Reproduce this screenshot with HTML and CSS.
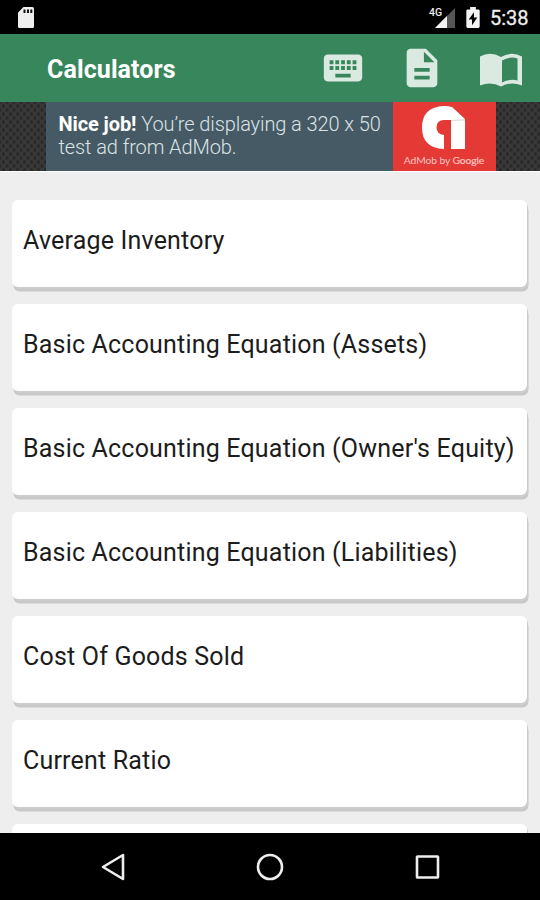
FILE: index.html
```
<!DOCTYPE html>
<html lang="en">
<head>
<meta charset="utf-8">
<title>Calculators</title>
<link rel="stylesheet" href="styles.css">
</head>
<body>
<div class="screen">
  <div class="status">
    <svg class="sd" width="16" height="21" viewBox="0 0 16 21"><path fill="#eee" d="M5.500 0H14.500Q16 0 16 1.500V19.500Q16 21 14.500 21H1.500Q0 21 0 19.500V5.500Z"/><path fill="#111" d="M5.500 2.500h2v3.500h-2zM9 2.500h2v3.500H9zM12.300 2.500h2v3.500h-2z"/></svg>
    <div class="status-right">
      <svg width="28" height="22" viewBox="0 0 28 22"><path fill="#555" d="M26 1V21H6Z"/><path fill="#000" d="M0 0h15v9H0z"/><path fill="#f4f4f4" d="M18 9V21H6Z"/><text class="net" x="0" y="9">4G</text></svg>
      <svg class="battery" width="14" height="21" viewBox="0 0 14 22"><path fill="#f2f2f2" d="M4 0h6v2.500h2.500Q14 2.500 14 4v16.500Q14 22 12.500 22h-11Q0 22 0 20.500V4Q0 2.500 1.500 2.500H4z"/><path fill="#000" d="M8 5.500L2.500 13H6v6l5.500-8H8z"/></svg>
      <span class="clock">5:38</span>
    </div>
  </div>
  <header class="bar">
    <h1>Calculators</h1>
    <nav>
      <svg width="46" height="46" viewBox="0 0 24 24"><path d="M20 5H4c-1.100 0-1.990.9-1.990 2L2 17c0 1.100.9 2 2 2h16c1.100 0 2-.9 2-2V7c0-1.100-.9-2-2-2zm-9 3h2v2h-2V8zm0 3h2v2h-2v-2zM8 8h2v2H8V8zm0 3h2v2H8v-2zm-1 2H5v-2h2v2zm0-3H5V8h2v2zm9 7H8v-2h8v2zm0-4h-2v-2h2v2zm0-3h-2V8h2v2zm3 3h-2v-2h2v2zm0-3h-2V8h2v2z"/></svg>
      <svg width="46" height="46" viewBox="0 0 24 24"><path d="M14 2H6c-1.100 0-1.990.9-1.990 2L4 20c0 1.100.89 2 1.990 2H18c1.100 0 2-.9 2-2V8l-6-6zm2 16H8v-2h8v2zm0-4H8v-2h8v2zm-3-5V3.500L18.500 9H13z"/></svg>
      <svg width="42" height="34" viewBox="0 0 42 34"><path fill-rule="evenodd" d="M0 3.500Q10.500-2 21 4Q31.500-2 42 3.500V32.500Q31 28 21 33.500Q11 28 0 32.500ZM22 7.500V29.500Q30 25.500 37.500 27.500V5.500Q30 3 22 7.500Z"/></svg>
    </nav>
  </header>
  <div class="ad">
    <div class="ad-copy"><div><b>Nice job!</b> You’re displaying a 320 x 50</div><div>test ad from AdMob.</div></div>
    <div class="ad-logo">
      <svg width="44" height="44" viewBox="0 0 44 44"><path fill="#fff" d="M22 0Q26 0 30 1L43 13V43H29V14H22Q14.500 14 14.500 21.500Q14.500 28 22 29V43Q0 42 0 21.500Q0 1 22 0Z"/><path fill="#ddd" d="M29 14L43 13V14.500L29 15Z"/></svg>
      <span>AdMob by <b>Google</b></span>
    </div>
  </div>
  <main class="list">
    <div class="card">Average Inventory</div>
    <div class="card">Basic Accounting Equation (Assets)</div>
    <div class="card">Basic Accounting Equation (Owner's Equity)</div>
    <div class="card">Basic Accounting Equation (Liabilities)</div>
    <div class="card">Cost Of Goods Sold</div>
    <div class="card">Current Ratio</div>
    <div class="card"></div>
  </main>
  <footer class="softkeys">
    <svg width="26" height="28" viewBox="0 0 26 28"><path d="M23 2V26L3 14Z"/></svg>
    <svg width="28" height="28" viewBox="0 0 28 28"><circle cx="14" cy="14" r="12"/></svg>
    <svg width="26" height="26" viewBox="0 0 26 26"><rect x="3" y="2.500" width="21" height="21" rx=".5"/></svg>
  </footer>
</div>
</body>
</html>
```
FILE: styles.css
```
* { box-sizing: border-box; }
body { margin: 0; font-family: Roboto, sans-serif; background: #000; }
svg { display: block; flex: none; }
.screen { width: 540px; height: 900px; display: flex; flex-direction: column; overflow: hidden; }

.status { height: 34px; flex: none; background: #000; display: flex; justify-content: space-between; align-items: flex-start; padding: 7px 12px 0 18px; }
.status-right { display: flex; align-items: flex-start; }
.net { font: 500 10.500px Roboto, sans-serif; fill: #eee; }
.battery { margin-left: 9px; }
.clock { margin-left: 10px; width: 38px; color: #eee; font-size: 20px; line-height: 23px; font-weight: 400; -webkit-text-stroke: .3px #eee; white-space: nowrap; }

.bar { height: 68px; flex: none; background: #38865c; display: flex; justify-content: space-between; align-items: center; padding: 0 18px 0 47px; }
h1 { margin: 3px 0 0; color: #fff; font-size: 25px; line-height: 30px; font-weight: 700; letter-spacing: .1px; }
nav { display: flex; align-items: center; fill: #daeae1; }
nav svg + svg { margin-left: 33px; }
nav svg:last-child { margin-left: 35px; margin-top: 3px; }

.ad { height: 70px; flex: none; display: flex; padding: 0 44.500px 0 45.500px; border-bottom: 1px solid #fff; background-color: #383838; background-image: radial-gradient(circle, #292929 1.500px, transparent 2px), radial-gradient(circle, #292929 1.500px, transparent 2px); background-size: 7px 8px; background-position: 0 0, 3.500px 4px; }
.ad-copy { flex: 1; min-width: 0; background: #455a64; color: #dce3e6; font-size: 20px; line-height: 23px; letter-spacing: -.1px; font-weight: 300; padding: 10.500px 0 0 13px; white-space: nowrap; }
.ad-copy b { color: #fff; font-weight: 700; }
.ad-logo { width: 103px; flex: none; background: #e53935; display: flex; flex-direction: column; align-items: center; padding-top: 4px; color: #ffc4c0; }
.ad-logo span { margin-top: 3px; font: 400 10.300px/14px Lato, sans-serif; letter-spacing: -.1px; white-space: nowrap; }
.ad-logo b { font-weight: 400; -webkit-text-stroke: .2px #ffc4c0; }

.list { height: 661px; flex: none; overflow: hidden; background: #eee; padding: 28px 13.500px 0 12px; display: flex; flex-direction: column; gap: 17px; }
.card { height: 87px; flex: none; background: #fff; border-radius: 6px; box-shadow: 1px 2px 0 #ccc, 1.500px 4.500px 0 #c8c8c8; padding: 26px 0 0 11px; color: #1c1c1c; font-size: 25px; line-height: 30px; letter-spacing: .19px; white-space: nowrap; }

.softkeys { height: 67px; flex: none; background: #000; display: flex; justify-content: space-between; align-items: center; padding: 0 100px 0 100px; fill: none; stroke: #eee; stroke-width: 2.600; stroke-linejoin: round; }
```
